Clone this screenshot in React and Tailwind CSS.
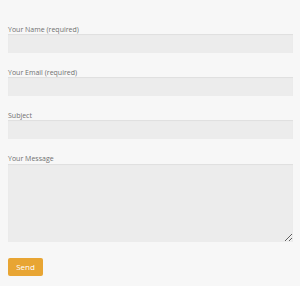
function Field({ label, children }) {
  return (
    <div className="mb-[14px]">
      <label className="block h-[10px] pt-[2px] text-[7px] leading-[8px] text-[#707070]">{label}</label>
      {children}
    </div>
  );
}

export default function App() {
  const inputCls =
    "block w-[285px] h-[19px] bg-[#ececec] border-0 shadow-[inset_0_1px_1px_rgba(0,0,0,0.06)] outline-none";

  return (
    <div
      className="min-h-[286px] w-[300px] bg-[#f7f7f7] pt-[24px] pl-[8px]"
      style={{ fontFamily: '"Open Sans", sans-serif' }}
    >
      <form onSubmit={(e) => e.preventDefault()}>
        <Field label="Your Name (required)">
          <input type="text" className={inputCls} />
        </Field>
        <Field label="Your Email (required)">
          <input type="email" className={inputCls} />
        </Field>
        <Field label="Subject">
          <input type="text" className={inputCls} />
        </Field>
        <div className="mb-[16px]">
          <label className="block h-[11px] pt-[2px] text-[7px] leading-[8px] text-[#707070]">Your Message</label>
          <textarea className="block w-[285px] h-[78px] bg-[#ececec] border-0 shadow-[inset_0_1px_1px_rgba(0,0,0,0.06)] outline-none resize" />
        </div>
        <button
          type="submit"
          className="block w-[35px] h-[18px] bg-[#e8a533] text-white text-[8px] leading-[18px] rounded-[2px]"
        >
          Send
        </button>
      </form>
    </div>
  );
}
